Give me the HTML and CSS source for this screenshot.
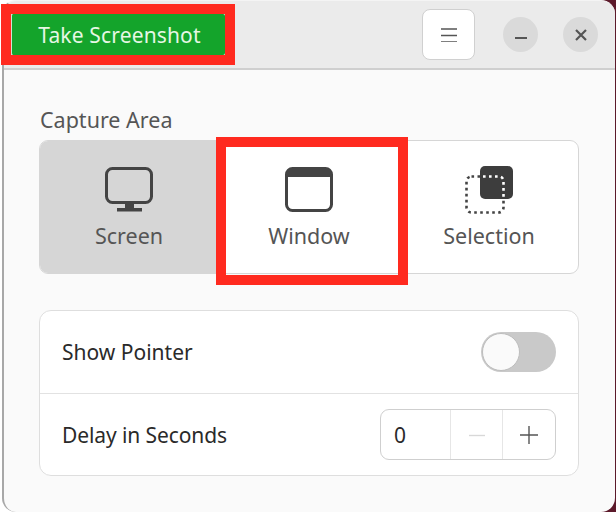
FILE: index.html
```html
<!DOCTYPE html>
<html lang="en">
<head>
    <meta charset="UTF-8">
    <title>Screenshot</title>
    <link rel="stylesheet" href="styles.css">
</head>
<body>
    <div class="window">
        <header class="titlebar">
            <button class="take-button">Take Screenshot</button>
            <button class="menu-button" aria-label="Menu">
                <svg width="16" height="14" viewBox="0 0 16 14"><path d="M0 1h16M0 7.500h16M0 14h16" stroke="#555" stroke-width="1.400" fill="none"/></svg>
            </button>
            <button class="round-button minimize" aria-label="Minimize">
                <svg width="14" height="14" viewBox="0 0 14 14"><path d="M1 10h12" stroke="#555" stroke-width="2" fill="none"/></svg>
            </button>
            <button class="round-button close" aria-label="Close">
                <svg width="14" height="14" viewBox="0 0 14 14"><path d="M2 2l10 10M12 2L2 12" stroke="#555" stroke-width="2.200" fill="none"/></svg>
            </button>
        </header>

        <main class="content">
            <h2 class="section-title">Capture Area</h2>
            <div class="area-switch">
                <div class="area active">
                    <svg class="area-icon" width="48" height="48" viewBox="0 0 48 48">
                        <rect x="1.500" y="2.500" width="45" height="34" rx="6" fill="none" stroke="#444" stroke-width="3"/>
                        <path d="M20 37h9v5h-9zM12 42h25v3.500H12z" fill="#444"/>
                    </svg>
                    <span>Screen</span>
                </div>
                <div class="area">
                    <svg class="area-icon" width="48" height="48" viewBox="0 0 48 48">
                        <rect x="1.500" y="2.500" width="45" height="42" rx="6" fill="none" stroke="#444" stroke-width="3"/>
                        <path d="M1.500 11V7a5 5 0 0 1 5-5h35a5 5 0 0 1 5 5v4z" fill="#444"/>
                    </svg>
                    <span>Window</span>
                </div>
                <div class="area">
                    <svg class="area-icon" width="48" height="48" viewBox="0 0 48 48">
                        <rect x="15" y="0" width="33" height="33" rx="5" fill="#3d3d3d"/>
                        <rect x="1.500" y="10.500" width="37" height="36" rx="5" fill="none" stroke="#444" stroke-width="2.600" stroke-dasharray="2.600 3.400"/>
                        <path d="M18 10.500h16a4.500 4.500 0 0 1 4.500 4.500v17" fill="none" stroke="#fff" stroke-width="2.600" stroke-dasharray="2.600 3.400"/>
                    </svg>
                    <span>Selection</span>
                </div>
            </div>

            <div class="options">
                <div class="option-row">
                    <span>Show Pointer</span>
                    <div class="toggle"><div class="toggle-knob"></div></div>
                </div>
                <div class="option-row">
                    <span class="delay-label">Delay in Seconds</span>
                    <div class="spin">
                        <span class="spin-value">0</span>
                        <button class="spin-button" aria-label="Decrease">
                            <svg width="16" height="16" viewBox="0 0 16 16"><path d="M0 8.500h16" stroke="#d8d8d8" stroke-width="1.400" fill="none"/></svg>
                        </button>
                        <button class="spin-button" aria-label="Increase">
                            <svg width="18" height="18" viewBox="0 0 18 18"><path d="M0 9h18M9 0v18" stroke="#555" stroke-width="1.400" fill="none"/></svg>
                        </button>
                    </div>
                </div>
            </div>
        </main>
    </div>

    <!-- red marks drawn over the screenshot -->
    <div class="mark mark-take"></div>
    <div class="mark mark-window"></div>
</body>
</html>
```

FILE: styles.css
```css
* {
    box-sizing: border-box;
}
html, body {
    margin: 0;
    height: 512px;
    overflow: hidden;
}
body {
    position: relative;
    padding: 0 1px 0 2px;
    background: linear-gradient(to right, #fff 50%, #5c1a2b 50%);
    font-family: "Noto Sans", sans-serif;
}
button {
    font-family: inherit;
    padding: 0;
    border: none;
}
.window {
    display: flex;
    flex-direction: column;
    height: 512px;
    background: #fafafa;
    border-left: 2px solid #a8a8a8;
    border-top: 1px solid #f4f4f4;
    border-radius: 14px;
    overflow: hidden;
}
.titlebar {
    display: flex;
    align-items: center;
    flex: none;
    height: 69px;
    padding: 0 17px 0 7px;
    background: #ebebeb;
    border-bottom: 2px solid #cfcfcf;
}
.take-button {
    width: 214px;
    height: 41px;
    margin-right: auto;
    padding-left: 2px;
    background: #14a42b;
    border-left: 1px solid #cfe6d2;
    border-radius: 2px;
    color: #e6f7e4;
    font-size: 21px;
    letter-spacing: 0.15px;
}
.menu-button {
    display: flex;
    align-items: center;
    justify-content: center;
    width: 53px;
    height: 51px;
    margin-right: 28px;
    background: #fff;
    border: 1px solid #d0d0d0;
    border-radius: 8px;
}
.round-button {
    display: flex;
    align-items: center;
    justify-content: center;
    width: 35px;
    height: 35px;
    background: #dadada;
    border-radius: 50%;
}
.minimize {
    margin-right: 25px;
}
.content {
    flex: 1;
    padding: 37px 36px 0 35px;
}
.section-title {
    margin: 1px 0 8px;
    padding-left: 1px;
    font-size: 21.500px;
    line-height: 24px;
    font-weight: normal;
    color: #555;
}
.area-switch {
    display: grid;
    grid-template-columns: 178px 182px 1fr;
    height: 134px;
    background: #fff;
    border: 1px solid #d6d6d6;
    border-radius: 9px;
    overflow: hidden;
    margin-bottom: 36px;
}
.area {
    display: flex;
    flex-direction: column;
    align-items: center;
    padding-top: 25px;
    font-size: 21.500px;
    line-height: 24px;
    color: #555;
}
.area.active {
    background: #d6d6d6;
}
.area-icon {
    margin-bottom: 10px;
}
.options {
    background: #fff;
    border: 1px solid #dedede;
    border-radius: 12px;
    height: 166px;
}
.option-row {
    display: flex;
    align-items: center;
    justify-content: space-between;
    height: 82px;
    padding: 0 22px;
    font-size: 21px;
    color: #2a2a2a;
}
.option-row + .option-row {
    border-top: 1px solid #e2e2e2;
}
.delay-label {
    letter-spacing: -0.1px;
}
.toggle {
    display: flex;
    align-items: center;
    width: 75px;
    height: 40px;
    padding: 1px;
    background: #c9c9c9;
    border-radius: 20px;
}
.toggle-knob {
    width: 38px;
    height: 38px;
    background: #fafafa;
    border: 1px solid #bdbdbd;
    border-radius: 50%;
}
.spin {
    display: grid;
    grid-template-columns: 69px 52px 1fr;
    width: 176px;
    height: 51px;
    border: 1px solid #cfcfcf;
    border-radius: 9px;
}
.spin-value {
    align-self: center;
    padding-left: 13px;
    color: #2a2a2a;
}
.spin-button {
    display: flex;
    align-items: center;
    justify-content: center;
    background: transparent;
    border-left: 1px solid #e6e6e6;
}
.mark {
    position: absolute;
    border: 10px solid #ff2a1f;
}
.mark-take {
    left: 1px;
    top: 4px;
    width: 234px;
    height: 61px;
}
.mark-window {
    left: 216px;
    top: 137px;
    width: 192px;
    height: 148px;
}
```
